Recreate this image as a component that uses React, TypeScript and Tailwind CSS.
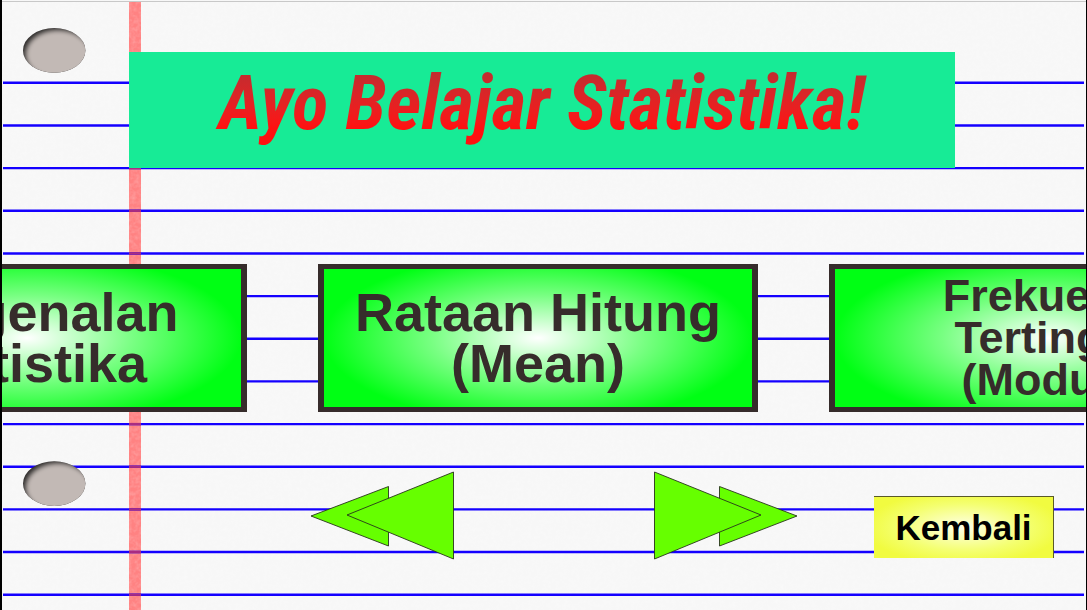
import React from "react";

const lines = Array.from({ length: 13 }, (_, i) => 82.8 + i * 42.66);

function Hole({ cy, id }: { cy: number; id: string }) {
  return (
    <g>
      <clipPath id={id}>
        <ellipse cx="54.2" cy={cy} rx="31.2" ry="22.3" />
      </clipPath>
      <g clipPath={`url(#${id})`}>
        <rect x="20" y={cy - 25} width="70" height="50" fill="#2b2928" />
        <ellipse cx="58" cy={cy + 4} rx="32.5" ry="24.5" fill="#c2b9b5" filter="url(#soft)" />
      </g>
    </g>
  );
}

function Paper() {
  return (
    <svg
      aria-hidden="true"
      className="absolute inset-0 h-full w-full"
      viewBox="2 0 1084 610"
      preserveAspectRatio="none"
    >
      <defs>
        <filter id="soft" x="-20%" y="-20%" width="140%" height="140%">
          <feGaussianBlur stdDeviation="2.4" />
        </filter>
        <filter id="grain" x="0" y="0" width="100%" height="100%">
          <feTurbulence type="fractalNoise" baseFrequency="0.25" numOctaves="3" seed="4" />
          <feColorMatrix values="0 0 0 0 1  0 0 0 0 1  0 0 0 0 1  0.9 0 0 0 -0.3" />
        </filter>
      </defs>
      <rect width="1087" height="610" fill="#f7f7f7" />
      <rect x="129" y="2" width="12" height="608" fill="#ff8282" />
      <rect y="2" width="1087" height="608" filter="url(#grain)" opacity="0.4" />
      {lines.map((y) => (
        <line key={y} x1="3" x2="1084" y1={y} y2={y} stroke="#1400ff" strokeWidth="2.4" />
      ))}
      {lines.map((y) => (
        <rect key={y} x="129" y={y - 1.2} width="12" height="2.4" fill="#a82c82" />
      ))}
      <Hole cy={50.4} id="hole-top" />
      <Hole cy={483.6} id="hole-bottom" />
      <rect width="1087" height="1" fill="#f7f7f7" />
      <rect y="1" width="1087" height="1" fill="#c8c8c8" />
    </svg>
  );
}

function TopicCard({ rows, small = false }: { rows: string[]; small?: boolean }) {
  return (
    <button
      type="button"
      className={
        "flex h-[148px] w-[440px] shrink-0 flex-col items-center justify-center border-x-6 border-y-5 border-[#362c2b] bg-[radial-gradient(ellipse_50%_62%_at_50%_50%,#ffffff_0%,#78ff82_50%,#00ff14_100%)] pb-1 font-bold whitespace-nowrap text-[#362c2b] " +
        (small ? "pt-1 text-[45px] leading-[42px]" : "pt-1 text-[54px] leading-[51px]")
      }
    >
      {rows.map((row) => (
        <span key={row}>{row}</span>
      ))}
    </button>
  );
}

function Arrow({ label, flip = false }: { label: string; flip?: boolean }) {
  return (
    <button type="button" aria-label={label} className="shrink-0">
      <svg
        width="144"
        height="89"
        viewBox="0 0 144 89"
        className={flip ? "block -scale-x-100" : "block"}
        fill="#66ff00"
        stroke="#28331c"
        strokeWidth="0.9"
      >
        <path d="M1 45 78.5 15.5V75Z" />
        <path d="M37 44 143.5 1V88Z" />
      </svg>
    </button>
  );
}

export default function App() {
  return (
    <main className="relative min-h-screen overflow-hidden border-r border-l-2 border-black font-['Liberation_Sans',Arial,sans-serif]">
      <Paper />
      <div className="relative flex flex-col pt-[52px]">
        <header className="flex justify-center pr-1">
          <div className="flex h-[116px] w-[826px] max-w-full justify-center bg-[#17eb96]">
            <h1 className="h-[102px] bg-linear-to-b from-[#bd2c30] from-15% to-[#ff1010] to-75% bg-clip-text px-3 font-['Roboto_Condensed','Liberation_Sans',sans-serif] text-[75px] leading-[102px] font-bold whitespace-nowrap text-transparent italic">
              Ayo Belajar Statistika!
            </h1>
          </div>
        </header>

        <nav aria-label="Materi" className="mt-24 flex justify-center gap-[71px] overflow-hidden pr-3">
          <TopicCard rows={["Pengenalan", "Statistika"]} />
          <TopicCard rows={["Rataan Hitung", "(Mean)"]} />
          <TopicCard rows={["Frekuensi", "Tertinggi", "(Modus)"]} small />
        </nav>

        <div className="mt-[59px] flex items-start justify-end pr-8">
          <div className="flex gap-[200px]">
            <Arrow label="Sebelumnya" />
            <Arrow label="Berikutnya" flip />
          </div>
          <button
            type="button"
            className="mt-[25px] ml-[76px] h-[62px] w-[180px] shrink-0 border-t border-r border-[#5a5a28] bg-[radial-gradient(ellipse_55%_60%_at_50%_50%,#ffffe8_0%,#f4ff70_65%,#f1fb40_100%)] text-[35px] leading-none font-bold text-black"
          >
            Kembali
          </button>
        </div>
      </div>
    </main>
  );
}
